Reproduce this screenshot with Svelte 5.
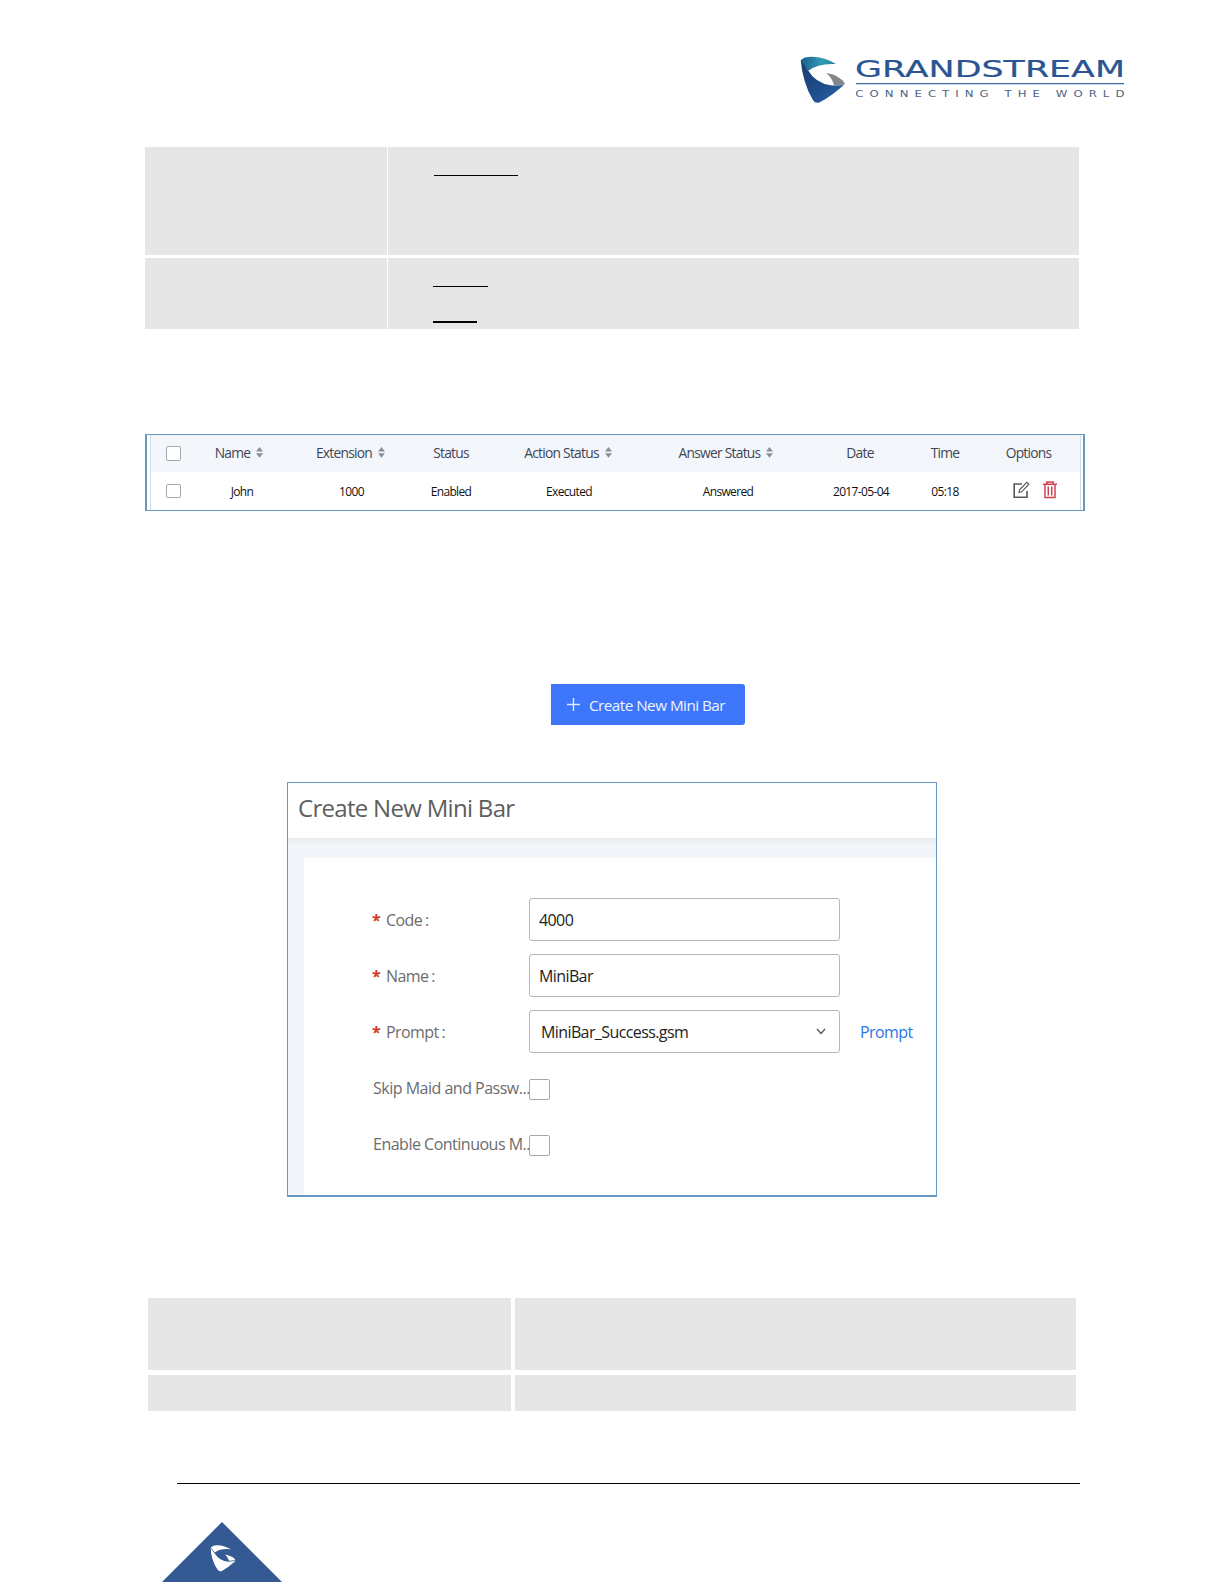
<script lang="ts">
    const columns = [
        { title: 'Name', value: 'John', sortable: true },
        { title: 'Extension', value: '1000', sortable: true },
        { title: 'Status', value: 'Enabled', sortable: false },
        { title: 'Action Status', value: 'Executed', sortable: true },
        { title: 'Answer Status', value: 'Answered', sortable: true },
        { title: 'Date', value: '2017-05-04', sortable: false },
        { title: 'Time', value: '05:18', sortable: false }
    ]

    let code = $state('4000')
    let name = $state('MiniBar')
    let prompt = $state('MiniBar_Success.gsm')
</script>

<div class="page">
    <header>
        <svg class="mark" width="45" height="47" viewBox="60 45 135 141">
            <defs>
                <linearGradient id="teal" x1="0" x2="1">
                    <stop offset="0" stop-color="#1c5d8c" />
                    <stop offset=".6" stop-color="#2f9bb5" />
                    <stop offset="1" stop-color="#2a7f9c" />
                </linearGradient>
                <linearGradient id="navy" x1="0" x2="1" y1="0" y2="1">
                    <stop offset="0" stop-color="#163d6e" />
                    <stop offset=".6" stop-color="#1f4f8f" />
                    <stop offset="1" stop-color="#2f6cab" />
                </linearGradient>
            </defs>
            <path d="M62 60Q66 47 98 47Q140 50 168 69Q115 66 85 89Z" fill="url(#teal)" />
            <path d="M62 56L85 89Q106 125 152 133Q178 136 195 128Q160 162 119 184Q107 189 99 178Q68 125 62 56Z" fill="url(#navy)" />
            <path d="M139 96Q178 101 195 128Q180 135 162 133Q158 113 139 96Z" fill="#85888b" />
        </svg>
        <svg class="wordmark" width="270" height="44" viewBox="0 0 270 44">
            <text x="-1" y="21" font-size="23" stroke="#2a5592" stroke-width=".2" textLength="270" lengthAdjust="spacingAndGlyphs">GRANDSTREAM</text>
            <path d="M0 27.6H268" stroke="#3d6ba3" stroke-width="1.4" />
            <text class="tagline" transform="scale(1.3 1)" x="-.5" y="41.5" font-size="9" textLength="207">CONNECTING THE WORLD</text>
        </svg>
    </header>

    <div class="grid options">
        <div></div>
        <div><u class="u1"></u></div>
        <div></div>
        <div><u class="u2"></u><u class="u3"></u></div>
    </div>

    <div class="list">
        <div class="row head">
            <span><i class="box"></i></span>
            {#each columns as col}
                <span>
                    {col.title}
                    {#if col.sortable}
                        <svg class="sort" width="7" height="11" viewBox="0 0 7 11"><path d="M3.5 0L7 4.6H0ZM0 6.2H7L3.5 10.8Z" /></svg>
                    {/if}
                </span>
            {/each}
            <span class="last">Options</span>
        </div>
        <div class="row">
            <span><i class="box small"></i></span>
            {#each columns as col}
                <span>{col.value}</span>
            {/each}
            <span class="icons">
                <svg width="17" height="18" viewBox="0 0 17 18" fill="none" stroke="#55585f" stroke-width="1.6">
                    <path d="M9 3H1.2V16.2H14V10" />
                    <path d="M6 11.5L6.6 8.8L13.8 1.3L15.9 3.2L8.6 10.8Z" stroke-width="1.1" />
                </svg>
                <svg width="14" height="18" viewBox="0 0 14 18" fill="none" stroke="#d2414d" stroke-width="1.5">
                    <path d="M0 3.2H14M3.8 3V1H10.2V3M2 3.5V16.5H12V3.5M5.3 5.5V14.5M8.7 5.5V14.5" />
                </svg>
            </span>
        </div>
    </div>

    <button class="create">
        <svg width="13" height="13" viewBox="0 0 13 13"><path d="M6.5 0V13M0 6.5H13" stroke="#dfe9ff" stroke-width="1.4" /></svg>
        <span>Create New Mini Bar</span>
    </button>

    <div class="dialog">
        <h3>Create New Mini Bar</h3>
        <div class="body">
            <form>
                <div class="field">
                    <label for="code"><b>*</b>Code<em>:</em></label>
                    <input id="code" bind:value={code} />
                </div>
                <div class="field">
                    <label for="name"><b>*</b>Name<em>:</em></label>
                    <input id="name" bind:value={name} />
                </div>
                <div class="field">
                    <label for="prompt"><b>*</b>Prompt<em>:</em></label>
                    <button type="button" id="prompt" class="select">
                        {prompt}
                        <svg width="10" height="7" viewBox="0 0 10 7"><path d="M1 1L5 5.5L9 1" fill="none" stroke="#555" stroke-width="1.3" /></svg>
                    </button>
                    <a href="#prompt">Prompt</a>
                </div>
                <div class="field">
                    <span class="label">Skip Maid and Passw...</span>
                    <i class="box large"></i>
                </div>
                <div class="field">
                    <span class="label">Enable Continuous M...</span>
                    <i class="box large"></i>
                </div>
            </form>
        </div>
    </div>

    <div class="grid codes">
        <div></div>
        <div></div>
        <div></div>
        <div></div>
    </div>

    <footer>
        <svg width="120" height="60" viewBox="0 0 120 60">
            <path d="M60 0L120 60H0Z" fill="#355a93" />
            <g fill="#fff" transform="translate(48.5 23)">
                <path d="M.3 2.2Q3 0 7 .2Q14 .5 20.5 4.3Q10 3 4.3 7.4Z" />
                <path d="M.2 3L4 8.2Q9 16 18 16.8L25 16Q18 22 11.5 26Q8.5 27 7 24.5Q.5 15 .2 3Z" />
                <path d="M14.5 9.5Q23 11 25 15.2L18.5 15.8Q17.5 12 14.5 9.5Z" />
            </g>
        </svg>
    </footer>
</div>

<style>
    :global(body) {
        margin: 0;
        background: #fff;
    }
    .page {
        width: 1224px;
        height: 1584px;
        overflow: hidden;
        display: flex;
        flex-direction: column;
        align-items: flex-start;
        font-family: "Open Sans", "Noto Sans", sans-serif;
    }
    header {
        display: flex;
        gap: 11px;
        height: 47px;
        margin: 56px 0 0 800px;
    }
    .wordmark {
        font-family: "DejaVu Sans", sans-serif;
        fill: #2a5592;
    }
    .tagline {
        fill: #4a6488;
    }
    .grid {
        display: grid;
    }
    .grid div {
        background: #e6e6e6;
    }
    .options {
        margin: 44px 0 0 145px;
        grid-template: 108px 71px / 242px 691px;
        gap: 3px 1px;
    }
    u {
        display: block;
        height: 1px;
        margin-left: 45px;
        background: #000;
    }
    .u1 {
        width: 84px;
        margin: 28px 0 0 46px;
    }
    .u2 {
        width: 55px;
        margin-top: 28px;
    }
    .u3 {
        width: 44px;
        height: 2px;
        margin-top: 34px;
    }
    .list {
        box-sizing: border-box;
        width: 940px;
        height: 77px;
        margin: 105px 0 0 145px;
        border: solid #6699c2;
        border-width: 1px 2px;
        box-shadow: inset 3px 0 #fff, inset 4px 0 #d5dbe6, inset -2px 0 #fff, inset -3px 0 #d5dbe6;
    }
    .row {
        display: grid;
        grid-template-columns: 52px 86px 133px 66px 170px 148px 118px 50px 113px;
        height: 38px;
        align-items: center;
        text-align: center;
        white-space: nowrap;
        font-size: 12px;
        letter-spacing: -.65px;
        color: #111;
    }
    .row span {
        display: flex;
        justify-content: center;
        align-items: center;
    }
    .head {
        height: 35px;
        padding-bottom: 2px;
        margin: 0 3px 0 4px;
        grid-template-columns: 44px 88px 135px 66px 168px 148px 120px 50px 110px;
        background: #f3f6fb;
        font-size: 13.8px;
        letter-spacing: -.75px;
        color: #3f4656;
    }
    .head .box {
        margin-top: 2px;
    }
    .sort {
        margin-left: 6px;
        fill: #8b8f96;
    }
    .row .last {
        padding-left: 7px;
    }
    .row .icons {
        gap: 13px;
        padding-left: 17px;
        margin-top: -2px;
    }
    .box {
        box-sizing: border-box;
        width: 15px;
        height: 15px;
        border: 1px solid #a5a8ad;
        border-radius: 2px;
        background: #fff;
    }
    .small {
        height: 14px;
        margin-top: -1px;
    }
    .create {
        display: flex;
        align-items: center;
        gap: 9px;
        width: 194px;
        height: 41px;
        margin: 173px 0 0 551px;
        padding: 0 0 0 16px;
        border: 0;
        border-radius: 0 3px 3px 0;
        background: #3d76fb;
        color: #eef3ff;
        font: inherit;
        font-size: 15.3px;
        letter-spacing: -.55px;
        white-space: nowrap;
    }
    .dialog {
        box-sizing: border-box;
        width: 650px;
        height: 415px;
        margin: 57px 0 0 287px;
        border: 1px solid #6899c4;
        border-bottom-width: 2px;
        display: flex;
        flex-direction: column;
    }
    h3 {
        margin: 0;
        height: 55px;
        padding-left: 10px;
        line-height: 49px;
        font-size: 24px;
        letter-spacing: -.7px;
        font-weight: 400;
        color: #5e5e5e;
    }
    .body {
        flex: 1;
        padding: 20px 0 0 16px;
        background: linear-gradient(#e9ebed, #f2f5f9 7px);
    }
    form {
        box-sizing: border-box;
        height: 100%;
        padding: 40px 0 0 69px;
        background: #fff;
    }
    .field {
        display: flex;
        align-items: center;
        height: 43px;
        margin-bottom: 13px;
        font-size: 16px;
        letter-spacing: -.6px;
        color: #222;
    }
    label, .label {
        width: 156px;
        flex: none;
        white-space: nowrap;
        color: #6c6c6c;
    }
    .label {
        letter-spacing: -.5px;
    }
    label b {
        display: inline-block;
        width: 14px;
        margin-left: -1px;
        color: #d43a2c;
    }
    em {
        margin-left: 3px;
        font-style: normal;
    }
    input, .select {
        box-sizing: border-box;
        width: 311px;
        height: 43px;
        padding: 0 9px;
        border: 1.5px solid #b4b7bc;
        border-radius: 3px;
        background: #fff;
        font: inherit;
        letter-spacing: inherit;
        color: #222;
    }
    .select {
        display: flex;
        align-items: center;
        justify-content: space-between;
        padding: 0 13px 0 11px;
    }
    a {
        margin-left: 20px;
        color: #2a76e4;
        text-decoration: none;
    }
    .large {
        width: 21px;
        height: 21px;
        margin-top: 3px;
    }
    .codes {
        margin: 101px 0 0 148px;
        grid-template: 72px 36px / 363px 561px;
        gap: 5px 4px;
    }
    footer {
        box-sizing: border-box;
        width: 903px;
        height: 101px;
        margin: 72px 0 0 177px;
        border-top: 1px solid #000;
        padding-top: 38px;
    }
    footer svg {
        display: block;
        margin-left: -15px;
    }
</style>
